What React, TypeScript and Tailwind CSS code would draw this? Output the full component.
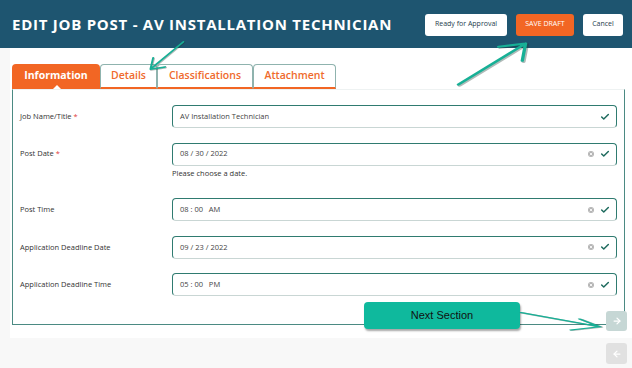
import { Check, X, ArrowRight, ArrowLeft } from "lucide-react";

const fields = [
  { label: "Job Name/Title", required: true, value: "AV Installation Technician", clear: false },
  { label: "Post Date", required: true, value: "08 / 30 / 2022", clear: true, hint: "Please choose a date." },
  { label: "Post Time", value: "08 : 00   AM", clear: true },
  { label: "Application Deadline Date", value: "09 / 23 / 2022", clear: true },
  { label: "Application Deadline Time", value: "05 : 00   PM", clear: true },
];

const tabs = ["Information", "Details", "Classifications", "Attachment"];

function Pointer({ className, d }: { className: string; d: string }) {
  return (
    <svg className={className} fill="none" viewBox="0 0 100 100" preserveAspectRatio="none">
      <path d={d} stroke="#1c3a34" strokeOpacity="0.35" strokeWidth="5" strokeLinecap="round" transform="translate(1.5 1.5)" />
      <path d={d} stroke="#17b096" strokeWidth="4" strokeLinecap="round" strokeLinejoin="round" />
    </svg>
  );
}

export default function App() {
  return (
    <div className="relative h-[368px] w-[632px] overflow-hidden bg-[#f8f8f8] font-['Open_Sans',sans-serif]">
      <header className="flex h-[48px] items-center justify-between bg-[#1e5570] pl-[12px] pr-[9px]">
        <h1 className="text-[15px] font-bold tracking-[0.05em] text-white">
          EDIT JOB POST - AV INSTALLATION TECHNICIAN
        </h1>
        <div className="flex items-center gap-[9px] pt-[1px] text-[7px]">
          <button className="h-[22px] w-[82px] rounded-[3px] bg-white text-[#1e3d4d]">Ready for Approval</button>
          <button className="h-[22px] w-[58px] rounded-[3px] bg-[#f26624] text-white">SAVE DRAFT</button>
          <button className="h-[22px] w-[40px] rounded-[3px] bg-white text-[#1e3d4d]">Cancel</button>
        </div>
      </header>

      <section className="ml-[10px] bg-white pb-[13px] pl-[2px] pr-[7px] pt-[16px]">
        <div className="flex h-[25px] items-stretch">
          {tabs.map((t, i) =>
            i === 0 ? (
              <div
                key={t}
                className="relative flex w-[88px] items-center justify-center rounded-t-[4px] border-b-2 border-[#f26624] bg-[#f26624] text-[10.5px] font-bold text-white"
              >
                {t}
                <span className="absolute -bottom-[2px] left-[41px] h-0 w-0 border-x-[4px] border-b-[4px] border-x-transparent border-b-white" />
              </div>
            ) : (
              <div
                key={t}
                className={`flex items-center justify-center rounded-t-[4px] border-x border-t border-b-2 border-[#8fb3ae] border-b-[#f26624] bg-white text-[10.5px] font-semibold text-[#ef6a2c] ${
                  i === 1 ? "w-[57px]" : i === 2 ? "w-[96px]" : "w-[83px]"
                }`}
              >
                {t}
              </div>
            )
          )}
        </div>
        <div className="h-[236px] border-x border-b border-t border-[#4b8a83] border-t-[#eef2f2] px-[7px] pt-[15px]">
          {fields.map((f) => (
            <div key={f.label} className="mb-[14.5px]">
              <div className="flex items-center">
                <div className="w-[152px] text-[7.5px] text-[#333]">
                  {f.label}
                  {f.required && <span className="text-[#e0403a]"> *</span>}
                </div>
                <div className="flex h-[23px] flex-1 items-center rounded-[4px] border border-[#2f7b70] border-b-[#c9d6d4] pl-[7px] pr-[6px] text-[7.5px] text-[#444]">
                  <span className="flex-1 whitespace-pre">{f.value}</span>
                  {f.clear && (
                    <span className="mr-[6px] flex h-[6px] w-[6px] items-center justify-center rounded-full bg-[#b5b5b5]">
                      <X className="h-[4px] w-[4px] text-white" strokeWidth={5} />
                    </span>
                  )}
                  <Check className="h-[10px] w-[10px] text-[#1e6b5e]" strokeWidth={3.5} />
                </div>
              </div>
              {f.hint && <div className="ml-[152px] mt-[2px] pb-[5px] text-[7.5px] text-[#333]">{f.hint}</div>}
            </div>
          ))}
        </div>
      </section>

      <div className="absolute left-[606px] top-[311px] flex h-[20px] w-[21px] items-center justify-center rounded-[3px] bg-[#c6d7d5]">
        <ArrowRight className="h-[10px] w-[10px] text-white" strokeWidth={3} />
      </div>
      <div className="absolute left-[606px] top-[343px] flex h-[21px] w-[21px] items-center justify-center rounded-[3px] bg-[#e1e1e1]">
        <ArrowLeft className="h-[10px] w-[10px] text-white" strokeWidth={3} />
      </div>

      <div className="absolute left-[364px] top-[302px] flex h-[27px] w-[156px] items-center justify-center rounded-[4px] bg-[#0fb99d] font-['Liberation_Sans',Arial,sans-serif] text-[11px] text-[#111] shadow-[1px_2px_2px_rgba(0,0,0,0.35)]">
        Next Section
      </div>

      <Pointer className="absolute left-[143px] top-[38px] h-[38px] w-[46px]" d="M 88 10 L 16 82 M 16 82 L 22 52 M 16 82 L 48 76" />
      <Pointer className="absolute left-[450px] top-[37px] h-[54px] w-[84px]" d="M 10 88 L 90 12 M 90 12 L 58 18 M 90 12 L 86 44" />
      <Pointer className="absolute left-[518px] top-[306px] h-[26px] w-[88px]" d="M 3 25 L 93 80 M 93 80 L 70 50 M 93 80 L 60 92" />
    </div>
  );
}
